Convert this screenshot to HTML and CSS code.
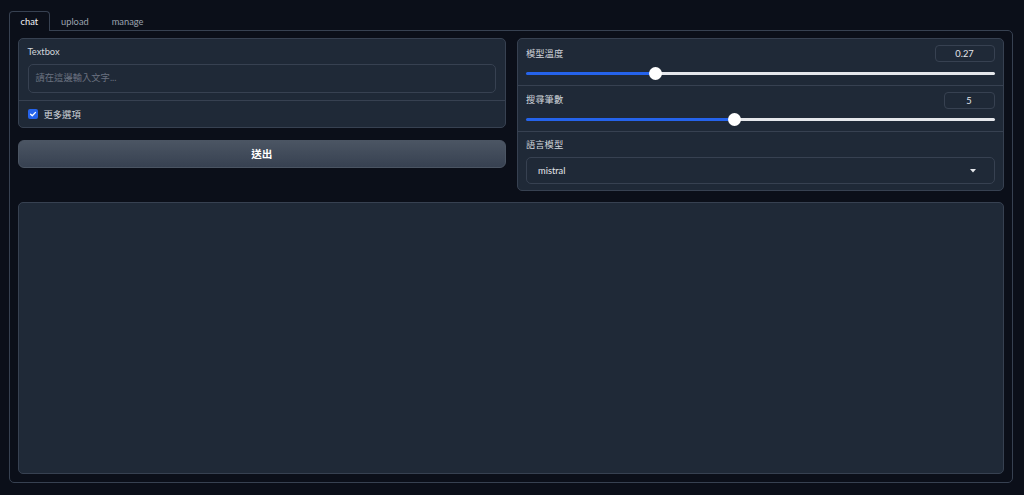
FILE: index.html
```html
<!DOCTYPE html>
<html lang="zh-Hant">
<head>
<meta charset="utf-8">
<title>chat</title>
<link rel="stylesheet" href="styles.css">
</head>
<body>
<div class="app">
  <div class="tabs">
    <div class="tab selected">chat</div>
    <div class="tab">upload</div>
    <div class="tab">manage</div>
  </div>
  <div class="panel">
    <div class="row">
      <div class="col">
        <div class="block form">
          <div class="section textbox">
            <div class="label">Textbox</div>
            <div class="input placeholder">請在這邊輸入文字...</div>
          </div>
          <div class="section check">
            <span class="checkbox"><svg viewBox="0 0 10 10" width="10" height="10"><path d="M2.6 5.2 L4.3 6.8 L7.5 3.4" fill="none" stroke="#fff" stroke-width="1.3" stroke-linecap="round" stroke-linejoin="round"/></svg></span>
            <span class="check-label">更多選項</span>
          </div>
        </div>
        <button class="btn">送出</button>
      </div>
      <div class="col">
        <div class="block form">
          <div class="section slider">
            <div class="slider-head">
              <span class="label">模型溫度</span>
              <span class="num wide">0.27</span>
            </div>
            <div class="track-wrap">
              <div class="track" style="--p:0.27"><span class="thumb"></span></div>
            </div>
          </div>
          <div class="section slider">
            <div class="slider-head">
              <span class="label">搜尋筆數</span>
              <span class="num">5</span>
            </div>
            <div class="track-wrap">
              <div class="track" style="--p:0.4444"><span class="thumb"></span></div>
            </div>
          </div>
          <div class="section dropdown-sec">
            <div class="label">語言模型</div>
            <div class="dropdown">
              <span>mistral</span>
              <svg class="arrow" viewBox="0 0 6 4" width="6" height="4"><path d="M0 0 H6 L3 3.6 Z" fill="#e5e7eb"/></svg>
            </div>
          </div>
        </div>
      </div>
    </div>
    <div class="block output"></div>
  </div>
</div>
</body>
</html>
```

FILE: styles.css
```css
* { box-sizing: border-box; }
html, body {
  margin: 0;
  background: #0b0f19;
  font-family: Lato, "Noto Sans CJK TC", sans-serif;
  font-size: 9.3px;
  color: #e5e7eb;
}
.app {
  width: 1004px;
  margin-left: 9px;
  padding-top: 11px;
}
.tabs {
  display: flex;
  height: 19px;
}
.tab {
  position: relative;
  z-index: 1;
  height: 20px;
  line-height: 19px;
  padding: 0 10.5px;
  border: 1px solid transparent;
  border-bottom: 0;
  border-radius: 4px 4px 0 0;
  color: #9ca3af;
  font-size: 9.3px;
}
.tab.selected {
  color: #f3f4f6;
  border-color: #374151;
  background: #0b0f19;
}
.panel {
  border: 1px solid #374151;
  border-radius: 0 5px 5px 5px;
  padding: 7px 8px 7.5px 8px;
}
.row {
  display: grid;
  grid-template-columns: 1fr 1fr;
  gap: 11px;
  margin-bottom: 11px;
}
.col {
  display: flex;
  flex-direction: column;
  gap: 12px;
}
.block {
  background: #1f2937;
  border: 1px solid #374151;
  border-radius: 5px;
}
.section + .section { border-top: 1px solid #374151; }
.label {
  color: #d1d5db;
  line-height: 12px;
}
.textbox { padding: 7px 8.5px 7px; }
.textbox .label { margin-bottom: 6px; }
.input {
  height: 28.5px;
  border: 1px solid #374151;
  border-radius: 5px;
  padding: 0 7px;
  line-height: 26px;
  background: #1f2937;
}
.placeholder { color: #6b7280; }
.check {
  height: 27px;
  display: flex;
  align-items: center;
  gap: 6px;
  padding: 0 8.5px;
}
.checkbox {
  width: 10px;
  height: 10px;
  border-radius: 2px;
  background: #2563eb;
  display: flex;
}
.check-label { color: #d1d5db; }
.btn {
  height: 28.5px;
  border: 1px solid #4b5563;
  border-radius: 6px;
  background: linear-gradient(to bottom, #4b5563, #374151);
  color: #fff;
  font-family: Lato, "Noto Sans CJK TC", sans-serif;
  font-size: 10.6px;
  font-weight: 700;
  padding: 0;
}
.slider { padding: 6px 8.5px 4.5px; }
.slider-head {
  display: flex;
  justify-content: space-between;
  align-items: center;
  height: 17px;
}
.num {
  width: 51px;
  height: 17px;
  border: 1px solid #374151;
  border-radius: 4px;
  text-align: center;
  line-height: 15px;
  color: #e5e7eb;
}
.num.wide { width: 60px; }
.track-wrap {
  margin-top: 4px;
  height: 14px;
  display: flex;
  align-items: center;
}
.track {
  position: relative;
  width: 100%;
  height: 3px;
  border-radius: 2px;
  background: linear-gradient(to right, #2563eb 0, #2563eb calc(6.5px + var(--p) * (100% - 13px)), #e5e7eb calc(6.5px + var(--p) * (100% - 13px)), #e5e7eb 100%);
}
.thumb {
  position: absolute;
  top: -5px;
  left: calc(var(--p) * (100% - 13px));
  width: 13px;
  height: 13px;
  border-radius: 50%;
  background: #fff;
}
.dropdown-sec { padding: 7px 8.5px 6px; }
.dropdown-sec .label { margin-bottom: 6px; }
.dropdown {
  height: 27px;
  border: 1px solid #374151;
  border-radius: 5px;
  display: flex;
  align-items: center;
  justify-content: space-between;
  padding: 0 18px 0 11px;
  color: #e5e7eb;
}
.output {
  height: 272px;
}
```
